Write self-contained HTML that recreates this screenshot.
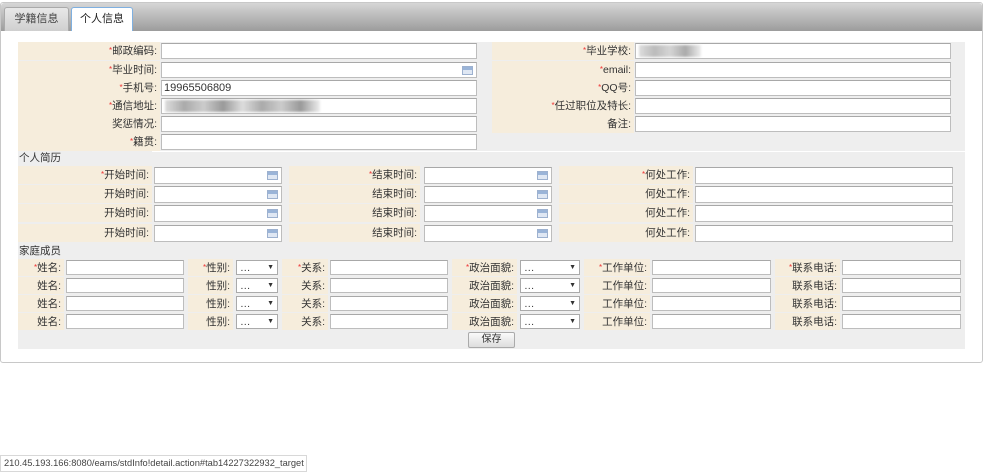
<!DOCTYPE html>
<html><head><meta charset="utf-8"><style>
*{margin:0;padding:0;box-sizing:border-box}
body{width:983px;height:472px;background:#fff;position:relative;overflow:hidden;font-family:"Liberation Sans","Noto Sans CJK SC",sans-serif;font-size:10.5px;color:#333}
div,span{position:absolute}
.panel{left:0;top:2px;width:983px;height:361px;border:1px solid #c8c8c8;border-radius:3px}
.hdr{left:1px;top:3px;width:981px;height:28px;background:linear-gradient(#d6d6d6,#9c9c9c);border-radius:3px 3px 0 0}
.tab{top:7px;height:24px;line-height:23px;text-align:center;font-size:11px;border:1px solid #aaa;border-bottom:none;border-radius:3px 3px 0 0}
.bg{left:18px;top:42px;width:947px;height:307px;background:#eeeeee}
.l{background:#f6eddc;text-align:right;padding-right:3px;line-height:18px;white-space:nowrap}
.i{background:#fff;border:1px solid #bdbdbd;border-top-color:#a8a8a8;line-height:14px;padding-left:2px;font-size:11px}
.r{position:static;color:#e33;font-size:8px;vertical-align:top}
.cal{right:3px;top:3px;width:11px;height:9px;background:linear-gradient(#9ab4d8 0 3px,#dfe7f3 3px);border:1px solid #9db1cf}
.sel{background:#fff;border:1px solid #aaa;line-height:14px;padding-left:3px}
.sel b{position:absolute;right:3px;top:0;font-size:7px}
.sec{background:#eee;line-height:14px;padding-left:1px}
</style></head><body>
<div class="panel"></div>
<div class="hdr"></div>
<div class="tab" style="left:4px;width:65px;background:linear-gradient(#e8e8e8,#cfcfcf);color:#444">学籍信息</div>
<div class="tab" style="left:71px;width:62px;background:#fff;border:1px solid #7fb0e0;border-bottom:none;color:#222">个人信息</div>
<div class="bg"></div>

<!-- section 1 -->
<div class="l" style="left:18px;top:42px;width:142px;height:18px"><span class="r">*</span>邮政编码:</div>
<div class="i" style="left:161px;top:43px;width:316px;height:16px"></div>
<div class="l" style="left:492px;top:42px;width:142px;height:18px"><span class="r">*</span>毕业学校:</div>
<div class="i" style="left:635px;top:43px;width:316px;height:16px"><span style="left:3px;top:1px;width:62px;height:12px;background:linear-gradient(90deg,#ddd,#bbb,#d5d5d5,#aaa,#eee);filter:blur(1px)"></span></div>

<div class="l" style="left:18px;top:61px;width:142px;height:18px"><span class="r">*</span>毕业时间:</div>
<div class="i" style="left:161px;top:62px;width:316px;height:16px"><span class="cal"></span></div>
<div class="l" style="left:492px;top:61px;width:142px;height:18px"><span class="r">*</span>email:</div>
<div class="i" style="left:635px;top:62px;width:316px;height:16px"></div>

<div class="l" style="left:18px;top:79px;width:142px;height:18px"><span class="r">*</span>手机号:</div>
<div class="i" style="left:161px;top:80px;width:316px;height:16px">19965506809</div>
<div class="l" style="left:492px;top:79px;width:142px;height:18px"><span class="r">*</span>QQ号:</div>
<div class="i" style="left:635px;top:80px;width:316px;height:16px"></div>

<div class="l" style="left:18px;top:97px;width:142px;height:18px"><span class="r">*</span>通信地址:</div>
<div class="i" style="left:161px;top:98px;width:316px;height:16px"><span style="left:3px;top:1px;width:155px;height:12px;background:linear-gradient(90deg,#ddd,#aaa,#ccc,#999,#ddd,#aaa,#ccc,#999,#eee);filter:blur(1px)"></span></div>
<div class="l" style="left:492px;top:97px;width:142px;height:18px"><span class="r">*</span>任过职位及特长:</div>
<div class="i" style="left:635px;top:98px;width:316px;height:16px"></div>

<div class="l" style="left:18px;top:115px;width:142px;height:18px">奖惩情况:</div>
<div class="i" style="left:161px;top:116px;width:316px;height:16px"></div>
<div class="l" style="left:492px;top:115px;width:142px;height:18px">备注:</div>
<div class="i" style="left:635px;top:116px;width:316px;height:16px"></div>

<div class="l" style="left:18px;top:133px;width:142px;height:18px"><span class="r">*</span>籍贯:</div>
<div class="i" style="left:161px;top:134px;width:316px;height:16px"></div>
<div style="left:152px;top:151px;width:813px;height:1px;background:#fff"></div>
<div class="sec" style="left:18px;top:151px;width:134px;height:15px">个人简历</div>

<!-- resume -->
<div class="l" style="left:18px;top:166px;width:134px;height:18px"><span class="r">*</span>开始时间:</div>
<div class="i" style="left:154px;top:167px;width:128px;height:17px"><span class="cal"></span></div>
<div class="l" style="left:289px;top:166px;width:131px;height:18px"><span class="r">*</span>结束时间:</div>
<div class="i" style="left:424px;top:167px;width:128px;height:17px"><span class="cal"></span></div>
<div class="l" style="left:559px;top:166px;width:134px;height:18px"><span class="r">*</span>何处工作:</div>
<div class="i" style="left:695px;top:167px;width:258px;height:17px"></div>

<div class="l" style="left:18px;top:185px;width:134px;height:18px">开始时间:</div>
<div class="i" style="left:154px;top:186px;width:128px;height:17px"><span class="cal"></span></div>
<div class="l" style="left:289px;top:185px;width:131px;height:18px">结束时间:</div>
<div class="i" style="left:424px;top:186px;width:128px;height:17px"><span class="cal"></span></div>
<div class="l" style="left:559px;top:185px;width:134px;height:18px">何处工作:</div>
<div class="i" style="left:695px;top:186px;width:258px;height:17px"></div>

<div class="l" style="left:18px;top:204px;width:134px;height:18px">开始时间:</div>
<div class="i" style="left:154px;top:205px;width:128px;height:17px"><span class="cal"></span></div>
<div class="l" style="left:289px;top:204px;width:131px;height:18px">结束时间:</div>
<div class="i" style="left:424px;top:205px;width:128px;height:17px"><span class="cal"></span></div>
<div class="l" style="left:559px;top:204px;width:134px;height:18px">何处工作:</div>
<div class="i" style="left:695px;top:205px;width:258px;height:17px"></div>

<div class="l" style="left:18px;top:224px;width:134px;height:18px">开始时间:</div>
<div class="i" style="left:154px;top:225px;width:128px;height:17px"><span class="cal"></span></div>
<div class="l" style="left:289px;top:224px;width:131px;height:18px">结束时间:</div>
<div class="i" style="left:424px;top:225px;width:128px;height:17px"><span class="cal"></span></div>
<div class="l" style="left:559px;top:224px;width:134px;height:18px">何处工作:</div>
<div class="i" style="left:695px;top:225px;width:258px;height:17px"></div>

<div class="sec" style="left:18px;top:244px;width:46px;height:15px">家庭成员</div>

<!-- family rows -->
<div class="l" style="left:18px;top:259px;width:46px;height:17px"><span class="r">*</span>姓名:</div>
<div class="i" style="left:66px;top:260px;width:118px;height:15px"></div>
<div class="l" style="left:188px;top:259px;width:45px;height:17px"><span class="r">*</span>性别:</div>
<div class="sel" style="left:236px;top:260px;width:42px;height:15px">…<b>▼</b></div>
<div class="l" style="left:282px;top:259px;width:46px;height:17px"><span class="r">*</span>关系:</div>
<div class="i" style="left:330px;top:260px;width:118px;height:15px"></div>
<div class="l" style="left:452px;top:259px;width:65px;height:17px"><span class="r">*</span>政治面貌:</div>
<div class="sel" style="left:520px;top:260px;width:60px;height:15px">…<b>▼</b></div>
<div class="l" style="left:584px;top:259px;width:66px;height:17px"><span class="r">*</span>工作单位:</div>
<div class="i" style="left:652px;top:260px;width:119px;height:15px"></div>
<div class="l" style="left:775px;top:259px;width:65px;height:17px"><span class="r">*</span>联系电话:</div>
<div class="i" style="left:842px;top:260px;width:119px;height:15px"></div>

<div class="l" style="left:18px;top:277px;width:46px;height:17px">姓名:</div>
<div class="i" style="left:66px;top:278px;width:118px;height:15px"></div>
<div class="l" style="left:188px;top:277px;width:45px;height:17px">性别:</div>
<div class="sel" style="left:236px;top:278px;width:42px;height:15px">…<b>▼</b></div>
<div class="l" style="left:282px;top:277px;width:46px;height:17px">关系:</div>
<div class="i" style="left:330px;top:278px;width:118px;height:15px"></div>
<div class="l" style="left:452px;top:277px;width:65px;height:17px">政治面貌:</div>
<div class="sel" style="left:520px;top:278px;width:60px;height:15px">…<b>▼</b></div>
<div class="l" style="left:584px;top:277px;width:66px;height:17px">工作单位:</div>
<div class="i" style="left:652px;top:278px;width:119px;height:15px"></div>
<div class="l" style="left:775px;top:277px;width:65px;height:17px">联系电话:</div>
<div class="i" style="left:842px;top:278px;width:119px;height:15px"></div>

<div class="l" style="left:18px;top:295px;width:46px;height:17px">姓名:</div>
<div class="i" style="left:66px;top:296px;width:118px;height:15px"></div>
<div class="l" style="left:188px;top:295px;width:45px;height:17px">性别:</div>
<div class="sel" style="left:236px;top:296px;width:42px;height:15px">…<b>▼</b></div>
<div class="l" style="left:282px;top:295px;width:46px;height:17px">关系:</div>
<div class="i" style="left:330px;top:296px;width:118px;height:15px"></div>
<div class="l" style="left:452px;top:295px;width:65px;height:17px">政治面貌:</div>
<div class="sel" style="left:520px;top:296px;width:60px;height:15px">…<b>▼</b></div>
<div class="l" style="left:584px;top:295px;width:66px;height:17px">工作单位:</div>
<div class="i" style="left:652px;top:296px;width:119px;height:15px"></div>
<div class="l" style="left:775px;top:295px;width:65px;height:17px">联系电话:</div>
<div class="i" style="left:842px;top:296px;width:119px;height:15px"></div>

<div class="l" style="left:18px;top:313px;width:46px;height:17px">姓名:</div>
<div class="i" style="left:66px;top:314px;width:118px;height:15px"></div>
<div class="l" style="left:188px;top:313px;width:45px;height:17px">性别:</div>
<div class="sel" style="left:236px;top:314px;width:42px;height:15px">…<b>▼</b></div>
<div class="l" style="left:282px;top:313px;width:46px;height:17px">关系:</div>
<div class="i" style="left:330px;top:314px;width:118px;height:15px"></div>
<div class="l" style="left:452px;top:313px;width:65px;height:17px">政治面貌:</div>
<div class="sel" style="left:520px;top:314px;width:60px;height:15px">…<b>▼</b></div>
<div class="l" style="left:584px;top:313px;width:66px;height:17px">工作单位:</div>
<div class="i" style="left:652px;top:314px;width:119px;height:15px"></div>
<div class="l" style="left:775px;top:313px;width:65px;height:17px">联系电话:</div>
<div class="i" style="left:842px;top:314px;width:119px;height:15px"></div>

<div style="left:468px;top:332px;width:47px;height:16px;border:1px solid #aaa;border-radius:2px;background:linear-gradient(#fafafa,#ddd);text-align:center;line-height:14px;font-size:10px">保存</div>

<div style="left:0;top:455px;width:307px;height:17px;border:1px solid #d8d8d8;background:#fff;line-height:15px;padding-left:3px;font-size:9.3px;color:#444;white-space:nowrap">210.45.193.166:8080/eams/stdInfo!detail.action#tab14227322932_target</div>
</body></html>
